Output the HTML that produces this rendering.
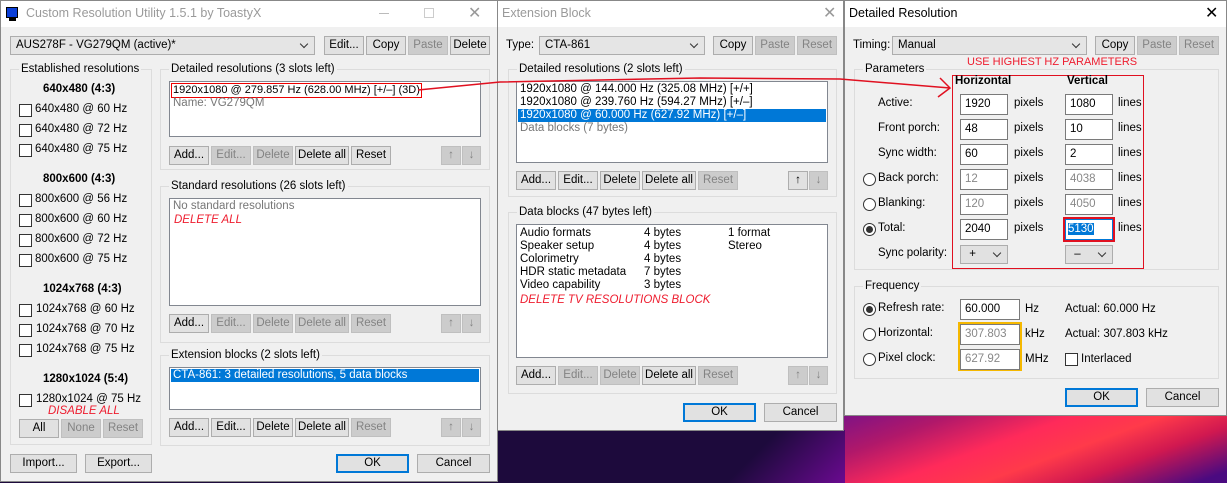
<!DOCTYPE html>
<html><head><meta charset="utf-8"><style>
*{box-sizing:border-box;margin:0;padding:0}
body{width:1227px;height:483px;overflow:hidden;position:relative;font-family:"Liberation Sans",sans-serif;font-size:11.5px;color:#000;background:#1d0a3c}
.a{position:absolute;white-space:nowrap}
.win{position:absolute;background:#f0f0f0;border:1px solid #888}
.tb{position:absolute;left:0;right:0;top:0;height:26px;background:#fff}
.bt{position:absolute;height:19px;background:#e1e1e1;border:1px solid #adadad;text-align:center;line-height:17px;white-space:nowrap}
.ds{background:#cccccc;border-color:#bfbfbf;color:#838383}
.gb{position:absolute;border:1px solid #dcdcdc}
.gt{position:absolute;top:-8px;left:8px;background:#f0f0f0;padding:0 2px;line-height:14px}
.lb{position:absolute;background:#fff;border:1px solid #828790}
.cb{position:absolute;width:13px;height:13px;background:#fff;border:1px solid #333}
.rd{position:absolute;width:13px;height:13px;border-radius:50%;background:#fff;border:1px solid #333}
.rd.on::after{content:"";position:absolute;left:2px;top:2px;width:7px;height:7px;border-radius:50%;background:#333}
.in{position:absolute;height:21px;background:#fff;border:1px solid #7a7a7a;padding-left:4px;line-height:19px}
.gr{color:#6d6d6d}
.cmb{position:absolute;height:19px;background:#e5e5e5;border:1px solid #adadad;line-height:17px;padding-left:5px}
.cmb::after{content:"";position:absolute;right:7px;top:4px;width:5px;height:5px;border-right:1px solid #333;border-bottom:1px solid #333;transform:rotate(45deg)}
.red{color:#ee1c2e;font-style:italic}
.hd{font-weight:bold}
.sel{position:absolute;background:#0078d7;color:#fff}
</style></head><body>
<div class="a" style="left:840px;top:400px;width:387px;height:83px;background:linear-gradient(160deg,#6a1090 0%,#b0186a 25%,#ff2a5a 45%,#ff3a4a 60%,#d01850 75%,#4a0a80 95%)"></div>
<div class="a" style="left:700px;top:430px;width:145px;height:53px;background:linear-gradient(135deg,#1d0a3c 40%,#6a0a90 100%)"></div>

<div class="win" style="left:0;top:0;width:498px;height:482px">
<div class="tb"></div>
<div class="a" style="left:5px;top:6px;width:12px;height:11px;background:#0b3fd8;border:1px solid #000"></div>
<div class="a" style="left:8px;top:17px;width:7px;height:3px;background:#000"></div>
<div class="a gr" style="left:25px;top:5px;font-size:12.5px;color:#9a9a9a">Custom Resolution Utility 1.5.1 by ToastyX</div>
<div class="a" style="left:378px;top:12px;width:10px;height:1px;background:#bbb"></div>
<div class="a" style="left:423px;top:7px;width:10px;height:10px;border:1px solid #ccc"></div>
<div class="a" style="left:467px;top:2px;font-size:16px;color:#999">✕</div>
<div class="cmb" style="left:9px;top:35px;width:305px">AUS278F - VG279QM (active)*</div>
<div class="bt" style="left:323px;top:35px;width:40px">Edit...</div>
<div class="bt" style="left:365px;top:35px;width:40px">Copy</div>
<div class="bt ds" style="left:407px;top:35px;width:40px">Paste</div>
<div class="bt" style="left:449px;top:35px;width:40px">Delete</div>

<div class="gb" style="left:9px;top:68px;width:142px;height:376px"><div class="gt">Established resolutions</div></div>
<div class="a hd" style="left:42px;top:82px">640x480 (4:3)</div>
<div class="cb" style="left:18px;top:103px"></div><div class="a" style="left:34px;top:102px">640x480 @ 60 Hz</div>
<div class="cb" style="left:18px;top:123px"></div><div class="a" style="left:34px;top:122px">640x480 @ 72 Hz</div>
<div class="cb" style="left:18px;top:143px"></div><div class="a" style="left:34px;top:142px">640x480 @ 75 Hz</div>
<div class="a hd" style="left:42px;top:172px">800x600 (4:3)</div>
<div class="cb" style="left:18px;top:193px"></div><div class="a" style="left:34px;top:192px">800x600 @ 56 Hz</div>
<div class="cb" style="left:18px;top:213px"></div><div class="a" style="left:34px;top:212px">800x600 @ 60 Hz</div>
<div class="cb" style="left:18px;top:233px"></div><div class="a" style="left:34px;top:232px">800x600 @ 72 Hz</div>
<div class="cb" style="left:18px;top:253px"></div><div class="a" style="left:34px;top:252px">800x600 @ 75 Hz</div>
<div class="a hd" style="left:42px;top:282px">1024x768 (4:3)</div>
<div class="cb" style="left:18px;top:303px"></div><div class="a" style="left:35px;top:302px">1024x768 @ 60 Hz</div>
<div class="cb" style="left:18px;top:323px"></div><div class="a" style="left:35px;top:322px">1024x768 @ 70 Hz</div>
<div class="cb" style="left:18px;top:343px"></div><div class="a" style="left:35px;top:342px">1024x768 @ 75 Hz</div>
<div class="a hd" style="left:42px;top:372px">1280x1024 (5:4)</div>
<div class="cb" style="left:18px;top:393px"></div><div class="a" style="left:35px;top:392px">1280x1024 @ 75 Hz</div>
<div class="a red" style="left:47px;top:404px">DISABLE ALL</div>
<div class="bt" style="left:18px;top:418px;width:40px">All</div>
<div class="bt ds" style="left:60px;top:418px;width:40px">None</div>
<div class="bt ds" style="left:102px;top:418px;width:40px">Reset</div>

<div class="gb" style="left:159px;top:68px;width:330px;height:101px"><div class="gt">Detailed resolutions (3 slots left)</div></div>
<div class="lb" style="left:168px;top:80px;width:312px;height:56px"></div>
<div class="a" style="left:170px;top:82px;height:15px;border:1px solid #e00;line-height:13px;padding:0 1px;font-size:11px">1920x1080 @ 279.857 Hz (628.00 MHz) [+/–] (3D)</div>
<div class="a gr" style="left:172px;top:96px;color:#777">Name: VG279QM</div>
<div class="bt" style="left:168px;top:145px;width:40px">Add...</div>
<div class="bt ds" style="left:210px;top:145px;width:40px">Edit...</div>
<div class="bt ds" style="left:252px;top:145px;width:40px">Delete</div>
<div class="bt" style="left:294px;top:145px;width:54px">Delete all</div>
<div class="bt" style="left:350px;top:145px;width:40px">Reset</div>
<div class="bt ds" style="left:440px;top:145px;width:20px">↑</div>
<div class="bt ds" style="left:461px;top:145px;width:19px">↓</div>

<div class="gb" style="left:159px;top:185px;width:330px;height:157px"><div class="gt">Standard resolutions (26 slots left)</div></div>
<div class="lb" style="left:168px;top:197px;width:312px;height:108px"></div>
<div class="a" style="left:172px;top:199px;color:#777">No standard resolutions</div>
<div class="a red" style="left:173px;top:213px">DELETE ALL</div>
<div class="bt" style="left:168px;top:313px;width:40px">Add...</div>
<div class="bt ds" style="left:210px;top:313px;width:40px">Edit...</div>
<div class="bt ds" style="left:252px;top:313px;width:40px">Delete</div>
<div class="bt ds" style="left:294px;top:313px;width:54px">Delete all</div>
<div class="bt ds" style="left:350px;top:313px;width:40px">Reset</div>
<div class="bt ds" style="left:440px;top:313px;width:20px">↑</div>
<div class="bt ds" style="left:461px;top:313px;width:19px">↓</div>

<div class="gb" style="left:159px;top:354px;width:330px;height:91px"><div class="gt">Extension blocks (2 slots left)</div></div>
<div class="lb" style="left:168px;top:366px;width:312px;height:43px"></div>
<div class="sel" style="left:170px;top:368px;width:308px;height:13px;line-height:13px;padding-left:2px">CTA-861: 3 detailed resolutions, 5 data blocks</div>
<div class="bt" style="left:168px;top:417px;width:40px">Add...</div>
<div class="bt" style="left:210px;top:417px;width:40px">Edit...</div>
<div class="bt" style="left:252px;top:417px;width:40px">Delete</div>
<div class="bt" style="left:294px;top:417px;width:54px">Delete all</div>
<div class="bt ds" style="left:350px;top:417px;width:40px">Reset</div>
<div class="bt ds" style="left:440px;top:417px;width:20px">↑</div>
<div class="bt ds" style="left:461px;top:417px;width:19px">↓</div>

<div class="bt" style="left:9px;top:453px;width:67px">Import...</div>
<div class="bt" style="left:84px;top:453px;width:67px">Export...</div>
<div class="bt" style="left:335px;top:453px;width:73px;border:2px solid #0078d7;line-height:15px">OK</div>
<div class="bt" style="left:416px;top:453px;width:73px">Cancel</div>
</div>

<div class="win" style="left:497px;top:0;width:347px;height:431px">
<div class="tb"></div>
<div class="a" style="left:4px;top:5px;font-size:12.5px;color:#9a9a9a">Extension Block</div>
<div class="a" style="left:325px;top:2px;font-size:16px;color:#999">✕</div>
<div class="a" style="left:8px;top:38px">Type:</div>
<div class="cmb" style="left:41px;top:35px;width:166px">CTA-861</div>
<div class="bt" style="left:215px;top:35px;width:40px">Copy</div>
<div class="bt ds" style="left:257px;top:35px;width:40px">Paste</div>
<div class="bt ds" style="left:299px;top:35px;width:40px">Reset</div>
<div class="gb" style="left:10px;top:68px;width:329px;height:128px"><div class="gt">Detailed resolutions (2 slots left)</div></div>
<div class="lb" style="left:18px;top:80px;width:312px;height:82px"></div>
<div class="a" style="left:22px;top:82px">1920x1080 @ 144.000 Hz (325.08 MHz) [+/+]</div>
<div class="a" style="left:22px;top:95px">1920x1080 @ 239.760 Hz (594.27 MHz) [+/–]</div>
<div class="sel" style="left:20px;top:108px;width:308px;height:13px;line-height:13px;padding-left:2px">1920x1080 @ 60.000 Hz (627.92 MHz) [+/–]</div>
<div class="a" style="left:22px;top:121px;color:#777">Data blocks (7 bytes)</div>
<div class="bt" style="left:18px;top:170px;width:40px">Add...</div>
<div class="bt" style="left:60px;top:170px;width:40px">Edit...</div>
<div class="bt" style="left:102px;top:170px;width:40px">Delete</div>
<div class="bt" style="left:144px;top:170px;width:54px">Delete all</div>
<div class="bt ds" style="left:200px;top:170px;width:40px">Reset</div>
<div class="bt" style="left:290px;top:170px;width:20px;font-weight:bold">↑</div>
<div class="bt ds" style="left:311px;top:170px;width:19px">↓</div>
<div class="gb" style="left:10px;top:211px;width:329px;height:182px"><div class="gt">Data blocks (47 bytes left)</div></div>
<div class="lb" style="left:18px;top:223px;width:312px;height:134px"></div>
<div class="a" style="left:22px;top:226px;line-height:13px">Audio formats<br>Speaker setup<br>Colorimetry<br>HDR static metadata<br>Video capability</div>
<div class="a" style="left:146px;top:226px;line-height:13px">4 bytes<br>4 bytes<br>4 bytes<br>7 bytes<br>3 bytes</div>
<div class="a" style="left:230px;top:226px;line-height:13px">1 format<br>Stereo</div>
<div class="a red" style="left:22px;top:293px">DELETE TV RESOLUTIONS BLOCK</div>
<div class="bt" style="left:18px;top:365px;width:40px">Add...</div>
<div class="bt ds" style="left:60px;top:365px;width:40px">Edit...</div>
<div class="bt ds" style="left:102px;top:365px;width:40px">Delete</div>
<div class="bt" style="left:144px;top:365px;width:54px">Delete all</div>
<div class="bt ds" style="left:200px;top:365px;width:40px">Reset</div>
<div class="bt ds" style="left:290px;top:365px;width:20px">↑</div>
<div class="bt ds" style="left:311px;top:365px;width:19px">↓</div>
<div class="bt" style="left:185px;top:402px;width:73px;border:2px solid #0078d7;line-height:15px">OK</div>
<div class="bt" style="left:266px;top:402px;width:73px">Cancel</div>
</div>

<div class="win" style="left:844px;top:0;width:383px;height:416px">
<div class="tb"></div>
<div class="a" style="left:4px;top:5px;font-size:12.5px">Detailed Resolution</div>
<div class="a" style="left:360px;top:2px;font-size:16px">✕</div>
<div class="a" style="left:8px;top:38px">Timing:</div>
<div class="cmb" style="left:47px;top:35px;width:195px">Manual</div>
<div class="bt" style="left:250px;top:35px;width:40px">Copy</div>
<div class="bt ds" style="left:292px;top:35px;width:40px">Paste</div>
<div class="bt ds" style="left:334px;top:35px;width:40px">Reset</div>
<div class="gb" style="left:9px;top:68px;width:365px;height:201px"><div class="gt">Parameters</div></div>
<div class="a" style="left:122px;top:55px;color:#ee1c2e;font-size:11px">USE HIGHEST HZ PARAMETERS</div>
<div class="a" style="left:107px;top:74px;width:192px;height:194px;border:1px solid #e01020"></div>
<div class="a hd" style="left:110px;top:74px">Horizontal</div>
<div class="a hd" style="left:222px;top:74px">Vertical</div>
<div class="a" style="left:33px;top:96px">Active:</div>
<div class="a" style="left:33px;top:121px">Front porch:</div>
<div class="a" style="left:33px;top:146px">Sync width:</div>
<div class="rd" style="left:18px;top:172px"></div><div class="a" style="left:33px;top:171px">Back porch:</div>
<div class="rd" style="left:18px;top:197px"></div><div class="a" style="left:33px;top:196px">Blanking:</div>
<div class="rd on" style="left:18px;top:222px"></div><div class="a" style="left:33px;top:221px">Total:</div>
<div class="a" style="left:33px;top:246px">Sync polarity:</div>
<div class="in" style="left:115px;top:93px;width:48px">1920</div>
<div class="in" style="left:115px;top:118px;width:48px">48</div>
<div class="in" style="left:115px;top:143px;width:48px">60</div>
<div class="in gr" style="left:115px;top:168px;width:48px;color:#888">12</div>
<div class="in gr" style="left:115px;top:193px;width:48px;color:#888">120</div>
<div class="in" style="left:115px;top:218px;width:48px">2040</div>
<div class="a" style="left:169px;top:90px;line-height:25px">pixels<br>pixels<br>pixels<br>pixels<br>pixels<br>pixels</div>
<div class="in" style="left:220px;top:93px;width:48px">1080</div>
<div class="in" style="left:220px;top:118px;width:48px">10</div>
<div class="in" style="left:220px;top:143px;width:48px">2</div>
<div class="in gr" style="left:220px;top:168px;width:48px;color:#888">4038</div>
<div class="in gr" style="left:220px;top:193px;width:48px;color:#888">4050</div>
<div class="a" style="left:218px;top:216px;width:52px;height:25px;border:2px solid #e01020"></div>
<div class="in" style="left:220px;top:218px;width:48px;border-color:#0078d7;padding-left:2px"><span style="background:#0078d7;color:#fff">5130</span></div>
<div class="a" style="left:273px;top:90px;line-height:25px">lines<br>lines<br>lines<br>lines<br>lines<br>lines</div>
<div class="cmb" style="left:115px;top:244px;width:48px;background:#e1e1e1">&nbsp;+</div>
<div class="cmb" style="left:220px;top:244px;width:48px;background:#e1e1e1">&nbsp;–</div>
<div class="gb" style="left:9px;top:285px;width:365px;height:93px"><div class="gt">Frequency</div></div>
<div class="rd on" style="left:18px;top:302px"></div><div class="a" style="left:33px;top:301px">Refresh rate:</div>
<div class="rd" style="left:18px;top:327px"></div><div class="a" style="left:33px;top:326px">Horizontal:</div>
<div class="rd" style="left:18px;top:352px"></div><div class="a" style="left:33px;top:351px">Pixel clock:</div>
<div class="in" style="left:115px;top:298px;width:60px">60.000</div>
<div class="a" style="left:113px;top:321px;width:64px;height:49px;border:2px solid #f5b800"></div>
<div class="in" style="left:115px;top:323px;width:60px;color:#888">307.803</div>
<div class="in" style="left:115px;top:348px;width:60px;color:#888">627.92</div>
<div class="a" style="left:180px;top:302px">Hz</div>
<div class="a" style="left:180px;top:327px">kHz</div>
<div class="a" style="left:180px;top:352px">MHz</div>
<div class="a" style="left:220px;top:302px">Actual: 60.000 Hz</div>
<div class="a" style="left:220px;top:327px">Actual: 307.803 kHz</div>
<div class="cb" style="left:220px;top:352px"></div><div class="a" style="left:236px;top:352px">Interlaced</div>
<div class="bt" style="left:220px;top:387px;width:73px;border:2px solid #0078d7;line-height:15px">OK</div>
<div class="bt" style="left:301px;top:387px;width:73px">Cancel</div>
</div>

<svg class="a" style="left:0;top:0" width="1227" height="483">
<polyline points="418,90 500,82 600,80 700,78 840,79 950,88" fill="none" stroke="#e01020" stroke-width="1.5"/>
<polyline points="940,78 950,88 938,97" fill="none" stroke="#e01020" stroke-width="1.5"/>
</svg>
</body></html>
